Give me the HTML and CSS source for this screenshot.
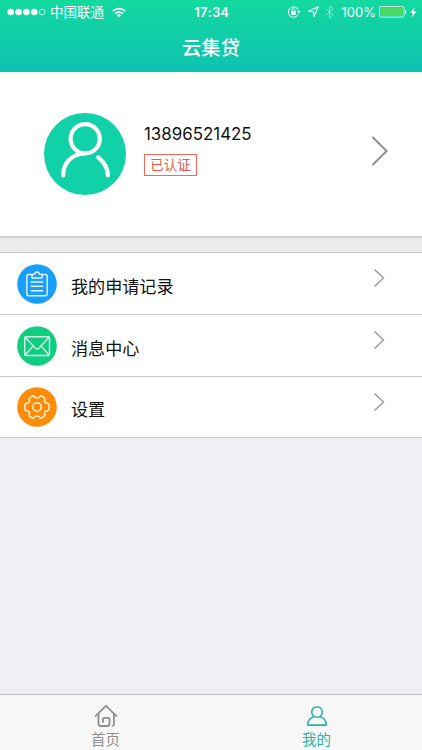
FILE: index.html
```html
<!DOCTYPE html>
<html lang="zh-CN">
<head>
  <meta charset="UTF-8">
  <meta name="viewport" content="width=device-width, initial-scale=1.0">
  <title>云集贷</title>
  <link rel="stylesheet" href="styles.css">
</head>
<body>
  <div class="app">
    <header class="header">
      <!-- 状态栏 -->
      <div class="status-bar">
        <div class="status-left">
          <svg class="signal" width="40" height="8" viewBox="0 0 40 8">
            <g fill="#fff">
              <circle cx="3.7" cy="4" r="3.3"/>
              <circle cx="11.6" cy="4" r="3.3"/>
              <circle cx="19.4" cy="4" r="3.3"/>
              <circle cx="27.3" cy="4" r="3.3"/>
            </g>
            <circle cx="35.2" cy="4" r="2.9" fill="none" stroke="#fff" stroke-width=".8"/>
          </svg>
          <span class="carrier">中国联通</span>
          <svg class="wifi" width="14" height="11" viewBox="0 0 14 11" fill="none" stroke="#fff" stroke-width="1.8">
            <path d="M.8 4.2a8.8 8.8 0 0 1 12.4 0"/>
            <path d="M3.2 6.7a5.4 5.4 0 0 1 7.6 0"/>
            <path d="M7 10.4 4.9 8.3a3 3 0 0 1 4.2 0z" fill="#fff" stroke="none"/>
          </svg>
        </div>
        <span class="time">17:34</span>
        <div class="status-right">
          <svg class="lock" width="14" height="12" viewBox="0 0 14 12" fill="none" stroke="#fff">
            <path d="M11.3 8.2A5.2 5.2 0 1 1 11.4 4.3" stroke-width="1"/>
            <path d="M9.6 5h4L11.8 7.4z" fill="#fff" stroke="none"/>
            <path d="M4.9 5.5V4.2a1.5 1.5 0 0 1 3 0v1.3" stroke-width=".9"/>
            <path d="M4 5.3h4.8v3.5H4z" fill="#fff" stroke="none"/>
          </svg>
          <svg class="location" width="12" height="12" viewBox="0 0 12 12" fill="none" stroke="#fff" stroke-width="1.1">
            <path d="M11 1 6.9 10.7 6.4 5.7 1 5.3z"/>
          </svg>
          <svg class="bluetooth" width="9" height="14" viewBox="0 0 9 14" fill="none" stroke="#fff" stroke-width="1">
            <path d="M.7 3.8 8 10.2 4.5 13.3V.8L8 3.8.7 10.2"/>
          </svg>
          <span class="percent">100%</span>
          <svg class="battery" width="28" height="12" viewBox="0 0 28 12">
            <rect x=".5" y=".5" width="24.6" height="10.6" rx="1.5" fill="none" stroke="#d9f9ec" stroke-width=".9"/>
            <rect x="1.5" y="1.5" width="22.6" height="8.6" rx=".6" fill="#4cd864"/>
            <path d="M26 3.9c1.6.4 1.6 3.6 0 4z" fill="#fff"/>
          </svg>
          <svg class="bolt" width="7" height="11" viewBox="0 0 7 11">
            <path d="M4.5.5.3 6h2.5L1.9 10.4 6.5 4.6H3.8z" fill="#fff"/>
          </svg>
        </div>
      </div>
      <h1 class="title">云集贷</h1>
    </header>

    <main class="content">
      <!-- 用户信息 -->
      <section class="profile">
        <svg class="avatar" width="82" height="82" viewBox="0 0 82 82" fill="none" stroke="#fff" stroke-width="4.2" stroke-linecap="round">
          <circle cx="41" cy="41" r="41" fill="#10d1a8" stroke="none"/>
          <circle cx="41.2" cy="25.8" r="14.6"/>
          <path d="M19.2 62.4C19.2 49.8 28 40.7 41 40.4"/>
          <path d="M54.2 44.4C60.2 49 63.7 55.2 63.9 62.4"/>
        </svg>
        <div class="user">
          <span class="phone">13896521425</span>
          <span class="badge">已认证</span>
        </div>
        <svg class="profile-arrow" width="18" height="32" viewBox="0 0 18 32" fill="none" stroke="#8f8f8f" stroke-width="2">
          <path d="M1.5 2 15.6 16 1.5 30"/>
        </svg>
      </section>

      <!-- 菜单列表 -->
      <ul class="menu">
        <li class="menu-item">
          <svg class="menu-icon" width="40" height="40" viewBox="0 0 40 40" fill="none" stroke="#e5f6ff" stroke-width="1.4" stroke-linejoin="round" stroke-linecap="round">
            <circle cx="20" cy="20" r="19.8" fill="#179ffa" stroke="none"/>
            <path d="M15 10.5h-3.2a2 2 0 0 0-2 2v17.3a2 2 0 0 0 2 2h16.4a2 2 0 0 0 2-2V12.5a2 2 0 0 0-2-2H25"/>
            <path d="M15 14v-3.6h2.5c.4-3.2 4.6-3.2 5 0H25V14z"/>
            <path d="M14.2 18h11.6M14.2 22.3h11.6M14.2 26.7h11.6"/>
          </svg>
          <span class="menu-text">我的申请记录</span>
          <svg class="menu-arrow" width="12" height="20" viewBox="0 0 12 20" fill="none" stroke="#999" stroke-width="1.4">
            <path d="M1.5 1.5 10.5 10 1.5 18.5"/>
          </svg>
        </li>
        <li class="menu-item">
          <svg class="menu-icon" width="40" height="40" viewBox="0 0 40 40" fill="none" stroke="#d7fae9" stroke-width="1.4" stroke-linejoin="round">
            <circle cx="20" cy="20" r="19.8" fill="#0fce80" stroke="none"/>
            <rect x="7.7" y="10.7" width="24.8" height="18.8" rx="1"/>
            <path d="M8.2 11.3 18.3 22.2q1.8 1.8 3.6 0L32 11.3M8.2 29l7.6-8.6M32 29l-7.6-8.6"/>
          </svg>
          <span class="menu-text">消息中心</span>
          <svg class="menu-arrow" width="12" height="20" viewBox="0 0 12 20" fill="none" stroke="#999" stroke-width="1.4">
            <path d="M1.5 1.5 10.5 10 1.5 18.5"/>
          </svg>
        </li>
        <li class="menu-item">
          <svg class="menu-icon" width="40" height="40" viewBox="0 0 40 40" fill="none" stroke="#fff0cf" stroke-width="1.6" stroke-linejoin="round">
            <circle cx="20" cy="20" r="19.8" fill="#ff8c08" stroke="none"/>
            <path d="M15.9 8.8Q16.8 8.6 17.2 9.5Q17.9 11 20 11T22.8 9.500Q23.2 8.600 24.1 8.800L27.300 10.600Q28 11.200 27.700 12.100C26.800 14.300 28.200 16.200 30.600 16.400Q32 16.600 32.100 17.800V22.200Q32 23.400 30.600 23.600C28.200 23.800 26.800 25.700 27.700 27.900Q28 28.800 27.300 29.400L24.100 31.200Q23.200 31.400 22.800 30.500Q22.100 29 20 29T17.200 30.500Q16.800 31.400 15.900 31.200L12.700 29.400Q12 28.800 12.300 27.900C13.200 25.700 11.800 23.800 9.400 23.600Q8 23.400 7.900 22.200V17.800Q8 16.600 9.400 16.400C11.800 16.200 13.200 14.300 12.300 12.100Q12 11.200 12.700 10.600Z"/>
            <circle cx="20" cy="20" r="4.2"/>
          </svg>
          <span class="menu-text">设置</span>
          <svg class="menu-arrow" width="12" height="20" viewBox="0 0 12 20" fill="none" stroke="#999" stroke-width="1.4">
            <path d="M1.5 1.5 10.5 10 1.5 18.5"/>
          </svg>
        </li>
      </ul>
    </main>

    <!-- 底部导航 -->
    <nav class="tab-bar">
      <a class="tab">
        <svg width="24" height="24" viewBox="0 0 24 24" fill="none" stroke="currentColor" stroke-width="1.8" stroke-linecap="round" stroke-linejoin="round">
          <path d="M1.7 11.8 12 1.8 22.3 11.8"/>
          <path d="M4.5 10V20a2 2 0 0 0 2 2H13.500a2 2 0 0 0 2-2V15.300a1.500 1.500 0 0 0-1.500-1.500H10.500A1.500 1.500 0 0 0 9 15.300V18"/>
          <path d="M20 10V20a2 2 0 0 1-1.500 1.900"/>
        </svg>
        <span>首页</span>
      </a>
      <a class="tab active">
        <svg width="24" height="24" viewBox="0 0 24 24" fill="none" stroke="currentColor" stroke-width="1.6" stroke-linejoin="round">
          <circle cx="12" cy="8" r="5.3"/>
          <path d="M9.2 12.6C5.3 13.8 2.7 16.6 2.7 21.1H21.3C21.3 16.6 18.7 13.8 14.8 12.6"/>
        </svg>
        <span>我的</span>
      </a>
    </nav>
  </div>
</body>
</html>
```
FILE: styles.css
```css
* {
  margin: 0;
  padding: 0;
  box-sizing: border-box;
}
body {
  font-family: Inter, "Noto Sans CJK SC", sans-serif;
  background-color: #efeff4;
  color: #111;
}
svg {
  display: block;
  flex-shrink: 0;
}
.app {
  height: 100vh;
  min-height: 750px;
  display: flex;
  flex-direction: column;
  overflow: hidden;
}
/* 顶部 */
.header {
  height: 72px;
  background: linear-gradient(#14d99f, #0dc2b1);
  color: #fff;
}
.status-bar {
  height: 24px;
  padding: 0 5px 0 7px;
  display: grid;
  grid-template-columns: 1fr auto 1fr;
  align-items: center;
}
.status-left,
.status-right {
  display: flex;
  align-items: center;
}
.status-right {
  justify-content: flex-end;
}
.carrier {
  margin-left: 3px;
  font-size: 13.5px;
  line-height: 24px;
}
.wifi {
  margin-left: 8px;
}
.time {
  font-size: 12.5px;
  font-weight: 600;
  letter-spacing: 0.5px;
}
.location {
  margin-left: 6px;
}
.bluetooth {
  margin-left: 6px;
  opacity: 0.55;
}
.percent {
  margin-left: 8px;
  font-size: 13px;
}
.battery {
  margin-left: 3px;
}
.bolt {
  margin-left: 3px;
}
.title {
  font-size: 19.3px;
  font-weight: 500;
  line-height: 48px;
  text-align: center;
}
/* 用户信息 */
.content {
  flex: 1;
}
.profile {
  height: 166px;
  padding: 0 33px 0 44px;
  display: flex;
  align-items: center;
  background-color: #fff;
  border-bottom: 2px solid #d2d2d2;
}
.user {
  flex: 1;
  margin: 0 0 9px 18px;
  display: flex;
  flex-direction: column;
  align-items: flex-start;
}
.phone {
  font-size: 16.9px;
  line-height: 22px;
}
.badge {
  margin-top: 9px;
  width: 53px;
  height: 22px;
  border: 1px solid #f26a55;
  color: #ee5a3c;
  font-size: 13.5px;
  line-height: 20px;
  text-align: center;
}
.profile-arrow {
  margin-bottom: 6px;
}
/* 菜单 */
.menu {
  list-style: none;
  border-top: 14px solid #ebebeb;
}
.menu-item {
  height: 61.8px;
  padding: 1px 37px 0 17px;
  display: flex;
  align-items: center;
  background-color: #fff;
  border-top: 1px solid #c8c8c8;
}
.menu-item:last-child {
  height: 62.4px;
  border-bottom: 1px solid #c8c8c8;
}
.menu-text {
  flex: 1;
  margin: 6px 0 0 14px;
  font-size: 17.1px;
  line-height: 24px;
}
.menu-arrow {
  margin-bottom: 11px;
}
/* 底部导航 */
.tab-bar {
  height: 56px;
  display: flex;
  background-color: #f7f7f7;
  border-top: 1px solid #bcbcc0;
}
.tab {
  flex: 1;
  padding-top: 9px;
  display: flex;
  flex-direction: column;
  align-items: center;
  color: #8f8f8f;
  font-size: 14.5px;
  line-height: 24px;
}
.tab.active {
  color: #2bb39c;
}
```
